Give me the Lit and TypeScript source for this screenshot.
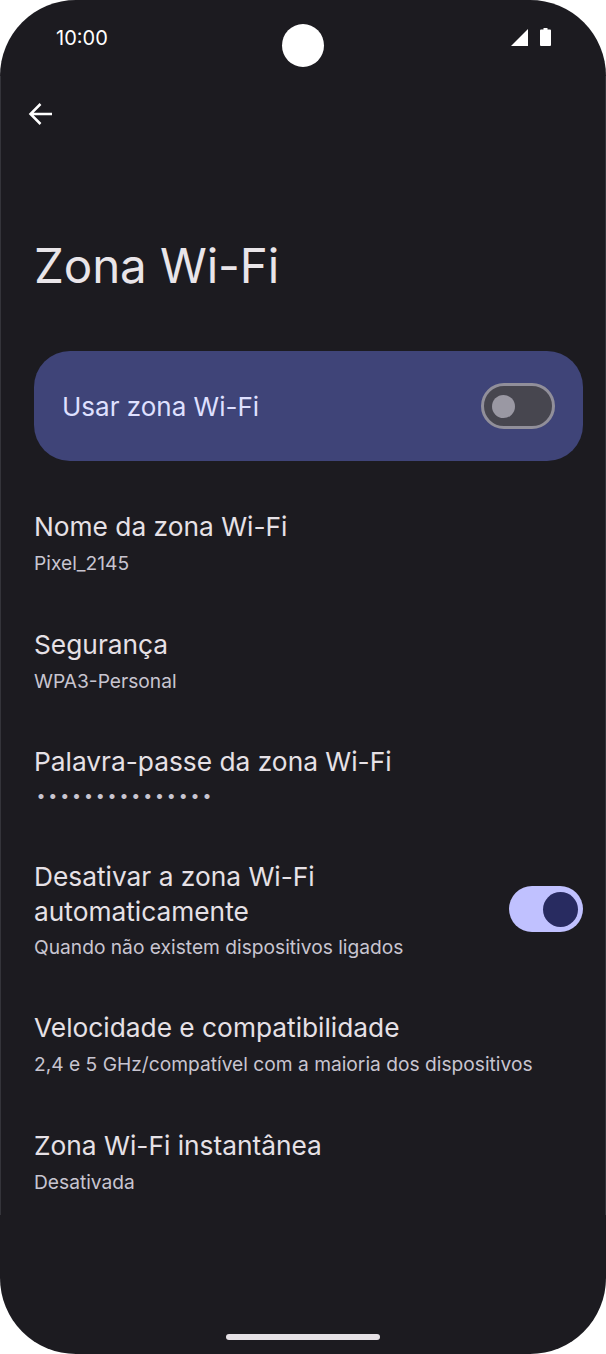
import { LitElement, html, css } from "lit";
import { customElement } from "lit/decorators.js";

const before = [
  { t: "Nome da zona Wi-Fi", s: "Pixel_2145" },
  { t: "Segurança", s: "WPA3-Personal" },
];
const after = [
  { t: "Velocidade e compatibilidade", s: "2,4 e 5 GHz/compatível com a maioria dos dispositivos" },
  { t: "Zona Wi-Fi instantânea", s: "Desativada" },
];

@customElement("app-root")
export class AppRoot extends LitElement {
  static styles = css`
    :host { display: block; width: 606px; height: 1354px; background: #fff; font-family: Inter, Roboto, sans-serif; }
    .phone { width: 606px; height: 1354px; background: #1c1b20; border-radius: 76px; overflow: hidden; position: relative; box-sizing: border-box; padding: 0 23px 0 34px; color: #e6e1e6; }
    .edge { position: absolute; left: 0; top: 76px; width: 606px; height: 1139px; box-sizing: border-box; border: solid #34343a; border-width: 0 1px; }
    .status { position: relative; display: flex; justify-content: space-between; align-items: center; height: 74px; padding: 0 32px 0 22px; margin-right: -23px; font-size: 20px; font-weight: 400; color: #fff; }
    .time { margin-top: 2px; }
    .cam { position: absolute; left: 282px; top: 24px; width: 42px; height: 43px; border-radius: 50%; background: #fff; }
    .sicons { display: flex; gap: 12px; align-items: center; margin-right: 23px; }
    .back { height: 80px; display: flex; align-items: center; margin-left: -6px; }
    h1 { font-size: 47.5px; font-weight: 400; margin: 0; line-height: 60px; padding-top: 82px; height: 60px; color: #e9e5e9; letter-spacing: -0.1px; }
    .main { margin-top: 55px; height: 110px; border-radius: 36px; background: #3f4478; display: flex; align-items: center; justify-content: space-between; padding: 0 28px; color: #dfe0ff; font-size: 26px; margin-bottom: 25px; }
    .sw { height: 46px; border-radius: 23px; box-sizing: border-box; display: flex; align-items: center; flex: none; }
    .off { width: 74px; background: #47464f; border: 3px solid #918f9a; padding-left: 8px; }
    .off i { width: 23px; height: 23px; border-radius: 50%; background: #9a98a3; }
    .on { width: 74px; background: #c0c1ff; justify-content: flex-end; padding-right: 5px; margin-bottom: 5px; }
    .on i { width: 35px; height: 35px; border-radius: 50%; background: #282b60; }
    .row { padding: 23px 0 22.5px; }
    .row.pw { padding-bottom: 25.5px; }
    .row.tog { display: flex; align-items: center; justify-content: space-between; }
    .t { font-size: 26.3px; line-height: 36px; }
    .tog .t { line-height: 35px; }
    .s { font-size: 19.2px; line-height: 36px; color: #c8c5d0; }
    .s.dots { font-size: 16px; letter-spacing: 2.85px; line-height: 30px; margin-left: 2.5px; }
    .nav { position: absolute; left: 226px; top: 1334px; width: 154px; height: 6px; border-radius: 3px; background: #e6e1e6; }
  `;
  private row(r: { t: string; s: string }) {
    return html`<div class="row"><div class="t">${r.t}</div><div class="s">${r.s}</div></div>`;
  }
  render() {
    return html`<div class="phone">
      <div class="edge"></div>
      <div class="status"><span class="time">10:00</span><span class="sicons">
        <svg width="18" height="18" viewBox="0 0 18 18"><path fill="#fff" d="M18 1v17H1z"/></svg>
        <svg width="11" height="18" viewBox="0 0 11 18"><path fill="#fff" d="M3.5 0h4v1.5h2.500a1 1 0 0 1 1 1V17a1 1 0 0 1-1 1H1a1 1 0 0 1-1-1V2.500a1 1 0 0 1 1-1h2.500z"/></svg>
      </span></div>
      <div class="cam"></div>
      <div class="back"><svg width="24" height="24" viewBox="0 0 24 24" fill="none" stroke="#fff" stroke-width="2.500"><path d="M24 12H3M12.500 2 2.500 12l10 10"/></svg></div>
      <h1>Zona Wi-Fi</h1>
      <div class="main"><span>Usar zona Wi-Fi</span><div class="sw off"><i></i></div></div>
      ${before.map(r => this.row(r))}
      <div class="row pw"><div class="t">Palavra-passe da zona Wi-Fi</div><div class="s dots">•••••••••••••••</div></div>
      <div class="row tog"><div><div class="t">Desativar a zona Wi-Fi<br />automaticamente</div><div class="s">Quando não existem dispositivos ligados</div></div><div class="sw on"><i></i></div></div>
      ${after.map(r => this.row(r))}
      <div class="nav"></div>
    </div>`;
  }
}
